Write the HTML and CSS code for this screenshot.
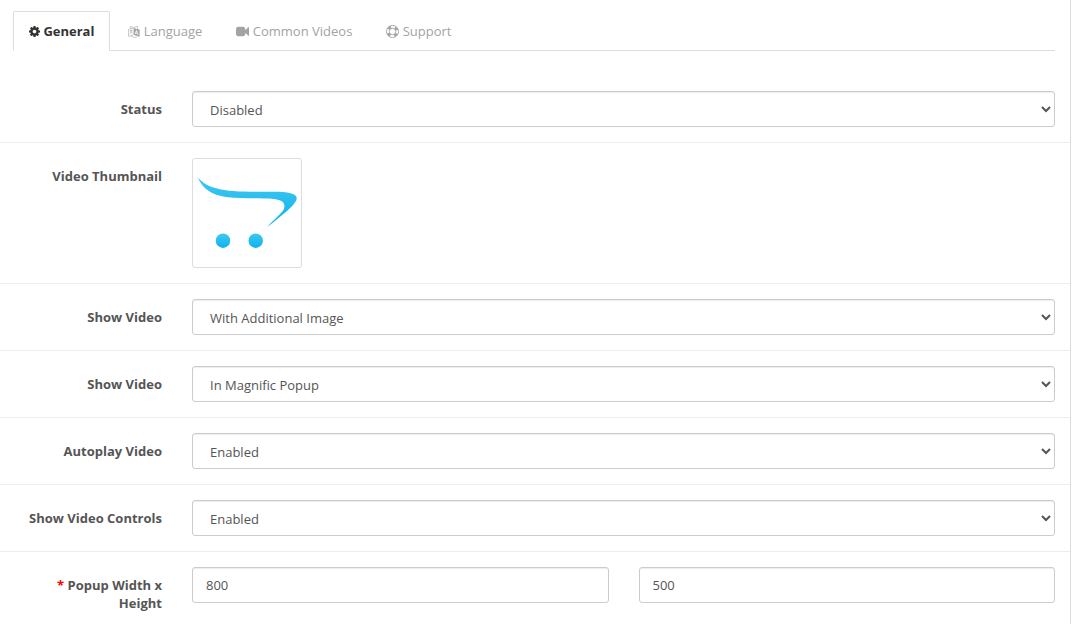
FILE: index.html
```html
<!DOCTYPE html>
<html lang="en">
<head>
<meta charset="utf-8">
<title>Product Video Settings</title>
<link rel="stylesheet" href="styles.css">
</head>
<body>
<main class="panel">
  <nav class="tabs">
    <a class="tab tab-active" href="#general"><svg class="icon icon-cog" viewBox="128 128 1536 1536" aria-hidden="true"><path d="M1152 896q0-106-75-181t-181-75-181 75-75 181 75 181 181 75 181-75 75-181zm512-109v222q0 12-8 23t-20 13l-185 28q-19 54-39 91 35 50 107 138 10 12 10 25t-9 23q-27 37-99 108t-94 71q-12 0-26-9l-138-108q-44 23-91 38-16 136-29 186-7 28-36 28h-222q-14 0-24.5-8.5t-11.5-21.5l-28-184q-49-16-90-37l-141 107q-10 9-25 9-14 0-25-11-126-114-165-168-7-10-7-23 0-12 8-23 15-21 51-66.5t54-70.5q-27-50-41-99l-183-27q-13-2-21-12.5t-8-23.5v-222q0-12 8-23t19-13l186-28q14-46 39-92-40-57-107-138-10-12-10-24 0-10 9-23 26-36 98.5-107.5t94.5-71.5q13 0 26 10l138 107q44-23 91-38 16-136 29-186 7-28 36-28h222q14 0 24.5 8.5t11.5 21.5l28 184q49 16 90 37l142-107q9-9 24-9 13 0 25 10 129 119 165 170 7 8 7 22 0 12-8 23-15 21-51 66.5t-54 70.5q26 50 41 98l183 28q13 2 21 12.5t8 23.5z"/></svg> General</a>
    <a class="tab" href="#language"><svg class="icon icon-language" viewBox="0 0 12 13" aria-hidden="true"><path d="M5.6 2.9 11.6 4.5V11.7L5.6 9.8ZM8.2 5.2 6.8 8.9 7.6 9.1 7.9 8.3 9.2 8.7 9.6 9.7 10.4 9.9 9 5.4ZM8.6 6.3 9 7.9 8.1 7.6Z" fill-rule="evenodd"/><path d="M5.6 2.9.6 4.4V11.4L5.6 9.8M2.6 1.5 2.6 3.5M2.6 1.4 5.6 2.6 9.6 1.2V3.6M1.8 6 4.6 5.2M3 4.7V5.6M4.2 5.4Q3.7 7.6 1.7 8.9M2.3 6.6Q3.2 7.7 4.6 8M3.2 11.2Q5.8 13.2 9.4 11.9" fill="none" stroke="currentColor" stroke-width=".6"/></svg> Language</a>
    <a class="tab" href="#videos"><svg class="icon icon-video" viewBox="0 0 1792 1792" aria-hidden="true"><path d="M1792 352v1088q0 42-39 59-13 5-25 5-27 0-45-19l-403-403v166q0 119-84.500 203.500t-203.500 84.500h-704q-119 0-203.500-84.500t-84.500-203.500v-704q0-119 84.500-203.500t203.500-84.500h704q119 0 203.500 84.500t84.500 203.500v165l403-402q18-19 45-19 12 0 25 5 39 17 39 59z"/></svg> Common Videos</a>
    <a class="tab" href="#support"><svg class="icon icon-ring" viewBox="0 0 14 14" aria-hidden="true"><g fill="none" stroke="currentColor"><circle cx="7" cy="7" r="6.500"/><circle cx="7" cy="7" r="3.500"/><circle cx="7" cy="7" r="5" stroke-width="3" stroke-dasharray="3.400 4.454" stroke-dashoffset="-2.227"/></g></svg> Support</a>
  </nav>

  <form class="settings">
    <div class="row">
      <label class="label" for="status">Status</label>
      <div class="field"><select class="control" id="status"><option>Disabled</option><option>Enabled</option></select></div>
    </div>
    <div class="row">
      <label class="label" for="thumbnail">Video Thumbnail</label>
      <div class="field">
        <button class="thumbnail" id="thumbnail" type="button">
          <svg class="logo" viewBox="0 0 100 100" aria-hidden="true">
            <defs>
              <linearGradient id="swoosh" x1="0" y1="0" x2="0" y2="1"><stop offset="0" stop-color="#42c8ef"/><stop offset="1" stop-color="#0bb2ee"/></linearGradient>
            </defs>
            <g fill="url(#swoosh)">
              <path d="M.7 14.300C8 23 20 28.700 53 28.700H76C91 28.700 99.700 30.500 99.700 35C99.700 41 88 50 70 64.300C77 56 87.500 49 87.500 43.500C87.500 38 83 35.700 67 35.500C54 35 42 35.500 29 34C15 32.300 5.500 26 .7 14.300Z"/>
              <circle cx="26" cy="77.700" r="7.200"/>
              <circle cx="58.700" cy="77.700" r="7.200"/>
            </g>
          </svg>
        </button>
      </div>
    </div>
    <div class="row">
      <label class="label" for="position">Show Video</label>
      <div class="field"><select class="control" id="position"><option>With Additional Image</option></select></div>
    </div>
    <div class="row">
      <label class="label" for="display">Show Video</label>
      <div class="field"><select class="control" id="display"><option>In Magnific Popup</option></select></div>
    </div>
    <div class="row">
      <label class="label" for="autoplay">Autoplay Video</label>
      <div class="field"><select class="control" id="autoplay"><option>Enabled</option><option>Disabled</option></select></div>
    </div>
    <div class="row">
      <label class="label" for="controls">Show Video Controls</label>
      <div class="field"><select class="control" id="controls"><option>Enabled</option><option>Disabled</option></select></div>
    </div>
    <div class="row">
      <label class="label" for="width"><span class="required">*</span> Popup Width x Height</label>
      <div class="field field-pair">
        <input class="control" id="width" type="text" value="800">
        <input class="control" id="height" type="text" value="500" aria-label="Popup Height">
      </div>
    </div>
  </form>
</main>
</body>
</html>
```
FILE: styles.css
```css
* {
  box-sizing: border-box;
}

body {
  margin: 0;
  background: #fff;
  color: #555;
  font: 13px/18px "Open Sans", "Liberation Sans", sans-serif;
}

.panel {
  min-height: 100vh;
  margin-right: 1px;
  padding-top: 11px;
  border-right: 1px solid #ddd;
}

.tabs {
  display: flex;
  gap: 2px;
  margin: 0 15px 25px 13px;
  border-bottom: 1px solid #ddd;
}

.tab {
  margin-bottom: -1px;
  padding: 10px 15px;
  border: 1px solid transparent;
  border-radius: 2px 2px 0 0;
  color: #a3a3a3;
  text-decoration: none;
  white-space: nowrap;
}

.tab-active {
  border-color: #ddd #ddd #fff;
  background: #fff;
  color: #333;
  font-weight: 700;
}

.icon {
  fill: currentColor;
  vertical-align: -2px;
}

.icon-cog {
  width: 11px;
  height: 11px;
  vertical-align: -1px;
}

.icon-language {
  width: 12px;
  height: 13px;
}

.icon-video,
.icon-ring {
  width: 13px;
  height: 13px;
}

.row {
  display: grid;
  grid-template-columns: 177fr 893fr;
  padding: 15px 0;
  border-top: 1px solid #ededed;
}

.row:first-child {
  border-top: 0;
}

.row:last-child {
  padding-bottom: 8px;
}

.label {
  padding: 9px 15px 0 13px;
  font-weight: 700;
  text-align: right;
}

.required {
  color: #f00;
}

.field {
  min-width: 0;
  padding: 0 15px;
}

.field-pair {
  display: grid;
  grid-template-columns: 1fr 1fr;
  gap: 30px;
}

.control {
  display: block;
  width: 100%;
  height: 36px;
  padding: 8px 13px;
  border: 1px solid #ccc;
  border-radius: 3px;
  background-color: #fff;
  box-shadow: inset 0 1px 1px rgba(0, 0, 0, 0.075);
  color: #555;
  font: inherit;
}

.thumbnail {
  display: block;
  width: 110px;
  height: 110px;
  padding: 4px;
  border: 1px solid #ddd;
  border-radius: 3px;
  background: #fff;
}

.logo {
  display: block;
  width: 100px;
  height: 100px;
}
```
